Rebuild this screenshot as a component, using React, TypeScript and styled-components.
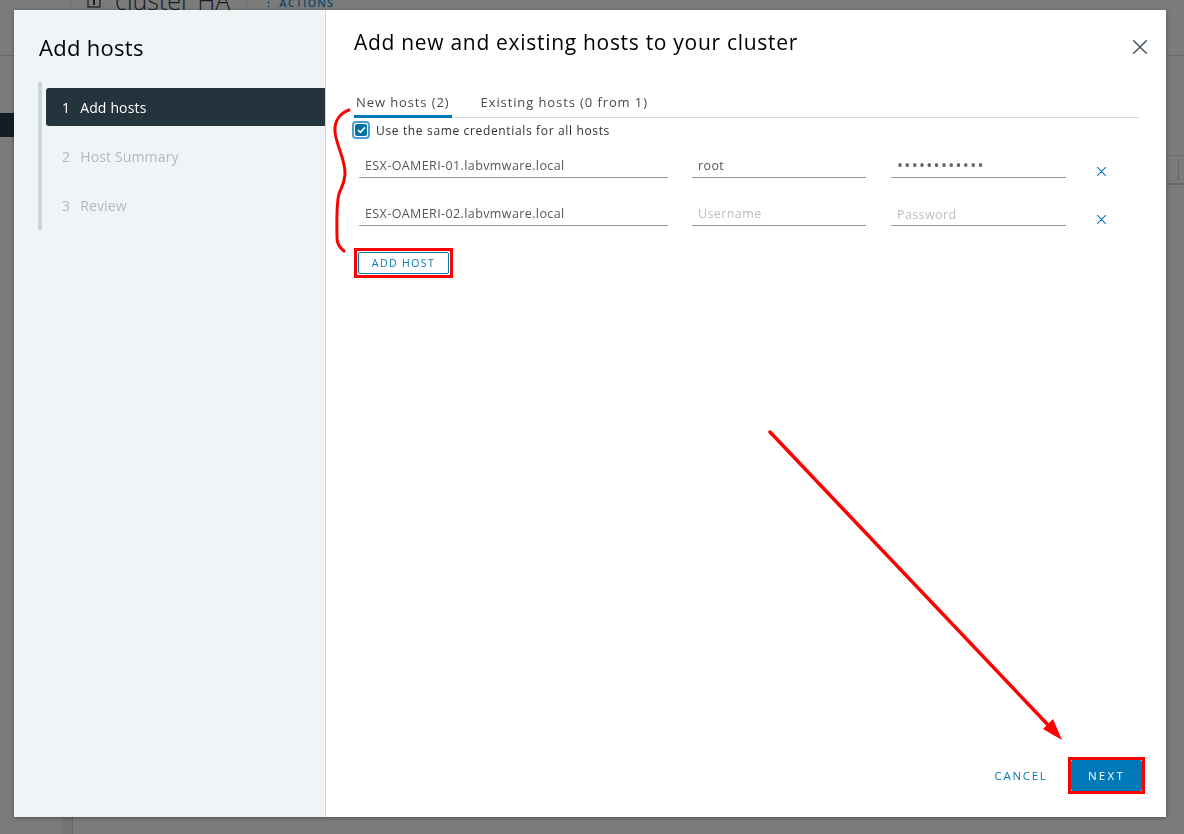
import styled, { createGlobalStyle } from 'styled-components';

const blue = '#0079b8';
const red = '#ff0000';

const GlobalStyle = createGlobalStyle`
  html, body {
    margin: 0;
    padding: 0;
    width: 1184px;
    height: 834px;
    overflow: hidden;
    background: #7b7b7b;
    font-family: "Open Sans", Lato, sans-serif;
  }
  * { box-sizing: border-box; }
`;

/* dimmed page behind the dialog */
const BackPage = styled.div`
  width: 1184px;
  height: 834px;
  display: flex;
  flex-direction: column;
  background: #7b7b7b;
`;

const BackHeader = styled.div`
  height: 56px;
  flex: none;
  display: flex;
  align-items: flex-start;
  padding-left: 70px;
  border-bottom: 1px solid #6a6a6a;
  overflow: hidden;
`;

const BackTitle = styled.div`
  display: flex;
  align-items: center;
  gap: 14px;
  margin-top: -12px;
  height: 24px;
  padding: 0 16px;
  border-left: 1px solid #6e6e6e;
  border-right: 1px solid #6e6e6e;
  font-size: 25px;
  font-weight: 300;
  color: #1a1a1a;
  line-height: 24px;
`;

const BackActions = styled.div`
  margin-top: -5px;
  padding-left: 16px;
  font-size: 11px;
  letter-spacing: 1.1px;
  color: #114a69;
  font-weight: 600;
`;

const BackBody = styled.div`
  flex: 1;
  display: flex;
`;

const BackNav = styled.div`
  width: 73px;
  flex: none;
  padding-top: 57px;
  border-right: 1px solid #666;
  background: linear-gradient(to right, #7b7b7b 62px, #747474 62px);
`;

const BackNavItem = styled.div`
  height: 24px;
  background: #141d23;
`;

const BackMain = styled.div`
  flex: 1;
  padding-top: 99px;
`;

const BackTableHead = styled.div`
  height: 30px;
  border-top: 1px solid #6a7078;
  border-bottom: 2px solid #686868;
  display: flex;
  justify-content: flex-end;
  align-items: center;
  padding-right: 5px;
`;

const BackTick = styled.div`
  width: 1px;
  height: 20px;
  background: #666;
`;

/* dialog */
const Modal = styled.div`
  position: fixed;
  top: 10px;
  left: 14px;
  width: 1152px;
  height: 807px;
  display: flex;
  background: #fff;
  box-shadow: 0 1px 4px rgba(0, 0, 0, 0.35);
`;

const Sidebar = styled.aside`
  width: 312px;
  flex: none;
  background: #eff4f7;
  border-right: 1px solid #cfd6da;
  padding: 22px 0 0 25px;
`;

const SidebarTitle = styled.h2`
  margin: 0;
  font-size: 22px;
  font-weight: 400;
  letter-spacing: 0.3px;
  line-height: 30px;
  color: #000;
`;

const StepList = styled.ol`
  list-style: none;
  margin: 20px 0 0 -1px;
  padding: 6px 0 6px 4px;
  border-left: 4px solid #ccd5da;
`;

const Step = styled.li<{ $active?: boolean }>`
  height: 38px;
  margin-bottom: 11px;
  display: flex;
  align-items: center;
  padding-left: 16px;
  gap: 10px;
  font-size: 14px;
  letter-spacing: 0.15px;
  border-radius: 3px 0 0 3px;
  background: ${(p) => (p.$active ? '#23343c' : 'transparent')};
  color: ${(p) => (p.$active ? '#fff' : '#b8b8b8')};

  &:last-child {
    margin-bottom: 0;
  }
`;

const Main = styled.section`
  flex: 1;
  display: flex;
  flex-direction: column;
  padding: 17px 25px 23px 28px;
`;

const Header = styled.div`
  display: flex;
  justify-content: space-between;
  align-items: flex-start;
`;

const Title = styled.h1`
  margin: 0;
  font-size: 21px;
  font-weight: 400;
  letter-spacing: 0.7px;
  line-height: 30px;
  color: #000;
`;

const CloseButton = styled.button`
  border: none;
  background: none;
  padding: 0;
  margin: 12px -6px 0 0;
  width: 15px;
  height: 15px;
  display: flex;
  align-items: center;
  justify-content: center;
  cursor: pointer;
`;

const Body = styled.div`
  flex: 1;
  padding-top: 37px;
`;

const Tabs = styled.div`
  display: flex;
  gap: 27px;
  margin-right: 2px;
  border-bottom: 1px solid #cdd7dd;
`;

const Tab = styled.button<{ $active?: boolean }>`
  border: none;
  background: none;
  font-family: inherit;
  font-size: 13px;
  letter-spacing: 0.9px;
  color: #4a4a4a;
  padding: 0 2px 5px;
  margin-bottom: -1px;
  line-height: 16px;
  border-bottom: 3px solid ${(p) => (p.$active ? blue : 'transparent')};
  cursor: pointer;
`;

const CheckRow = styled.label`
  display: flex;
  align-items: center;
  gap: 6px;
  margin: 3px 0 0 -2px;
  font-size: 12px;
  letter-spacing: 0.65px;
  color: #313131;
`;

const CheckBox = styled.span`
  width: 18px;
  height: 18px;
  border-radius: 4px;
  border: 2px solid #4a9ed1;
  padding: 1px;
  display: flex;
`;

const CheckInner = styled.span`
  flex: 1;
  border-radius: 2px;
  background: #0072a3;
  display: flex;
  align-items: center;
  justify-content: center;
`;

const HostRows = styled.div`
  display: flex;
  flex-direction: column;
  gap: 24px;
  padding: 15px 0 0 5px;
`;

const HostRow = styled.div`
  display: flex;
  align-items: flex-end;
`;

const Field = styled.input<{ $w: number; $gap?: number }>`
  width: ${(p) => p.$w}px;
  margin-right: ${(p) => p.$gap ?? 0}px;
  height: 24px;
  border: none;
  border-bottom: 1px solid #9a9a9a;
  background: transparent;
  outline: none;
  padding: 0 6px 1px;
  font-family: inherit;
  font-size: 12.5px;
  letter-spacing: 0.4px;
  color: #565656;

  &::placeholder {
    color: #bdbdbd;
  }
`;

const PasswordField = styled(Field)`
  letter-spacing: 1.3px;
  font-size: 16px;
  color: #666;
  padding-bottom: 2px;

  &::placeholder {
    font-size: 12.5px;
    letter-spacing: 0.4px;
  }
`;

const RemoveButton = styled.button`
  border: none;
  background: none;
  padding: 0;
  margin: 0 0 2px 31px;
  width: 9px;
  height: 9px;
  display: flex;
  cursor: pointer;
`;

/* red marker drawn round a control in the screenshot */
const Highlight = styled.span<{ $pad: number }>`
  display: inline-flex;
  border: 3px solid ${red};
  padding: ${(p) => p.$pad}px;
`;

const AddHostWrap = styled.div`
  margin-top: 22px;
`;

const AddHostButton = styled.button`
  width: 91px;
  height: 22px;
  border: 1px solid ${blue};
  border-radius: 2px;
  background: #fff;
  color: ${blue};
  font-family: inherit;
  font-size: 10.5px;
  letter-spacing: 1.4px;
  font-weight: 400;
  cursor: pointer;
`;

const Footer = styled.div`
  display: flex;
  justify-content: flex-end;
  align-items: center;
  gap: 7px;
  margin-right: -4px;
`;

const FooterButton = styled.button<{ $primary?: boolean }>`
  height: ${(p) => (p.$primary ? 31 : 37)}px;
  width: ${(p) => (p.$primary ? 71 : 80)}px;
  padding: 0;
  border: none;
  border-radius: 2px;
  font-family: inherit;
  font-size: 11.5px;
  font-weight: 400;
  letter-spacing: ${(p) => (p.$primary ? 2.3 : 1.7)}px;
  background: ${(p) => (p.$primary ? blue : 'transparent')};
  color: ${(p) => (p.$primary ? '#fff' : blue)};
  cursor: pointer;
`;

const Annotations = styled.svg`
  position: fixed;
  inset: 0;
  width: 1184px;
  height: 834px;
  pointer-events: none;
`;

const ClusterIcon = () => (
  <svg width="14" height="16" viewBox="0 0 14 16">
    <rect x="1" y="1" width="12" height="14" fill="none" stroke="#1a1a1a" strokeWidth="1.2" />
    <rect x="6" y="6" width="2" height="7" fill="#1a1a1a" />
  </svg>
);

const XIcon = ({ size, color, width }: { size: number; color: string; width: number }) => (
  <svg width={size} height={size} viewBox="0 0 10 10">
    <path d="M0.5 0.5 L9.5 9.5 M9.5 0.5 L0.5 9.5" stroke={color} strokeWidth={width} strokeLinecap="round" />
  </svg>
);

const hosts = [
  { name: 'ESX-OAMERI-01.labvmware.local', user: 'root', pass: 'VMware1!2345' },
  { name: 'ESX-OAMERI-02.labvmware.local', user: '', pass: '' },
];

const steps = ['Add hosts', 'Host Summary', 'Review'];

const App = (): JSX.Element => {
  return (
    <>
      <GlobalStyle />
      <BackPage>
        <BackHeader>
          <BackTitle>
            <ClusterIcon />
            cluster HA
          </BackTitle>
          <BackActions>⋮ ACTIONS</BackActions>
        </BackHeader>
        <BackBody>
          <BackNav>
            <BackNavItem />
          </BackNav>
          <BackMain>
            <BackTableHead>
              <BackTick />
            </BackTableHead>
          </BackMain>
        </BackBody>
      </BackPage>

      <Modal>
        <Sidebar>
          <SidebarTitle>Add hosts</SidebarTitle>
          <StepList>
            {steps.map((s, i) => (
              <Step key={s} $active={i === 0}>
                <span>{i + 1}</span>
                <span>{s}</span>
              </Step>
            ))}
          </StepList>
        </Sidebar>

        <Main>
          <Header>
            <Title>Add new and existing hosts to your cluster</Title>
            <CloseButton aria-label="Close">
              <XIcon size={14} color="#4b5a62" width={1.1} />
            </CloseButton>
          </Header>

          <Body>
            <Tabs>
              <Tab $active>New hosts (2)</Tab>
              <Tab>Existing hosts (0 from 1)</Tab>
            </Tabs>

            <CheckRow>
              <CheckBox>
                <CheckInner>
                  <svg width="9" height="8" viewBox="0 0 9 8">
                    <path d="M1 4.2 L3.4 6.4 L8 1.4" fill="none" stroke="#fff" strokeWidth="1.7" />
                  </svg>
                </CheckInner>
              </CheckBox>
              Use the same credentials for all hosts
            </CheckRow>

            <HostRows>
              {hosts.map((h) => (
                <HostRow key={h.name}>
                  <Field $w={309} $gap={24} defaultValue={h.name} />
                  <Field $w={174} $gap={25} defaultValue={h.user} placeholder="Username" />
                  <PasswordField $w={175} type="password" defaultValue={h.pass} placeholder="Password" />
                  <RemoveButton aria-label="Remove">
                    <XIcon size={9} color={blue} width={1.2} />
                  </RemoveButton>
                </HostRow>
              ))}
            </HostRows>

            <AddHostWrap>
              <Highlight $pad={1}>
                <AddHostButton>ADD HOST</AddHostButton>
              </Highlight>
            </AddHostWrap>
          </Body>

          <Footer>
            <FooterButton>CANCEL</FooterButton>
            <Highlight $pad={0}>
              <FooterButton $primary>NEXT</FooterButton>
            </Highlight>
          </Footer>
        </Main>
      </Modal>

      <Annotations viewBox="0 0 1184 834">
        <path
          d="M349 110 C341 113 334 120 335 132 C336 145 346 160 345 175 C344 185 340 190 339 194 C336 205 337 225 337 238 C337 244 340 248 344 251"
          fill="none"
          stroke={red}
          strokeWidth="3"
          strokeLinecap="round"
        />
        <path d="M770 432 L1050 727" stroke={red} strokeWidth="3.5" strokeLinecap="round" />
        <path d="M1062 740 L1043 729 L1053 719 Z" fill={red} />
      </Annotations>
    </>
  );
};

export default App;
